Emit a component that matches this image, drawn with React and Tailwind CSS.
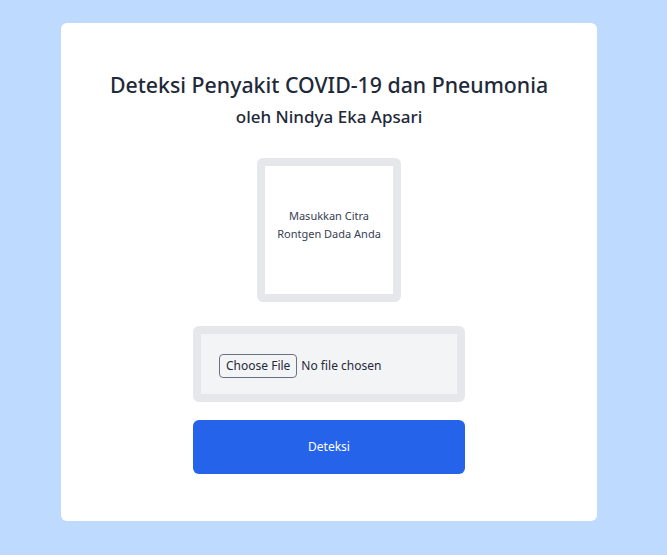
export default function App() {
  return (
    <div className="min-h-[555px] w-full bg-blue-200 pt-[23px] pl-[61px] font-['Noto_Sans',sans-serif] text-gray-800">
      <div className="flex h-[498px] w-[536px] flex-col items-center rounded-md bg-white pt-[46px]">
        <h1 className="text-[21.3px] font-medium leading-8 text-gray-800">Deteksi Penyakit COVID-19 dan Pneumonia</h1>
        <h2 className="mt-[4px] text-[17px] font-medium leading-6 text-gray-800">oleh Nindya Eka Apsari</h2>

        <div className="mt-[29px] flex h-[144px] w-[144px] items-center justify-center rounded-md border-8 border-gray-200 bg-white px-2 pb-[10px] text-center text-[11px] leading-[18px] text-gray-700">
          <p>Masukkan Citra Rontgen Dada Anda</p>
        </div>

        <div className="mt-[24px] h-[76px] w-[272px] rounded-md border-8 border-gray-200 bg-gray-100 px-[18px] pt-[18px]">
          <input type="file" className="text-[12px] text-gray-800 file:mr-1 file:rounded-sm file:border file:border-gray-500 file:bg-gray-100 file:px-[6px] file:py-[2px] file:text-[12px]" />
        </div>

        <button className="mt-[18px] h-[54px] w-[272px] rounded-md bg-[#2563eb] text-[12px] text-white">Deteksi</button>
      </div>
    </div>
  );
}
